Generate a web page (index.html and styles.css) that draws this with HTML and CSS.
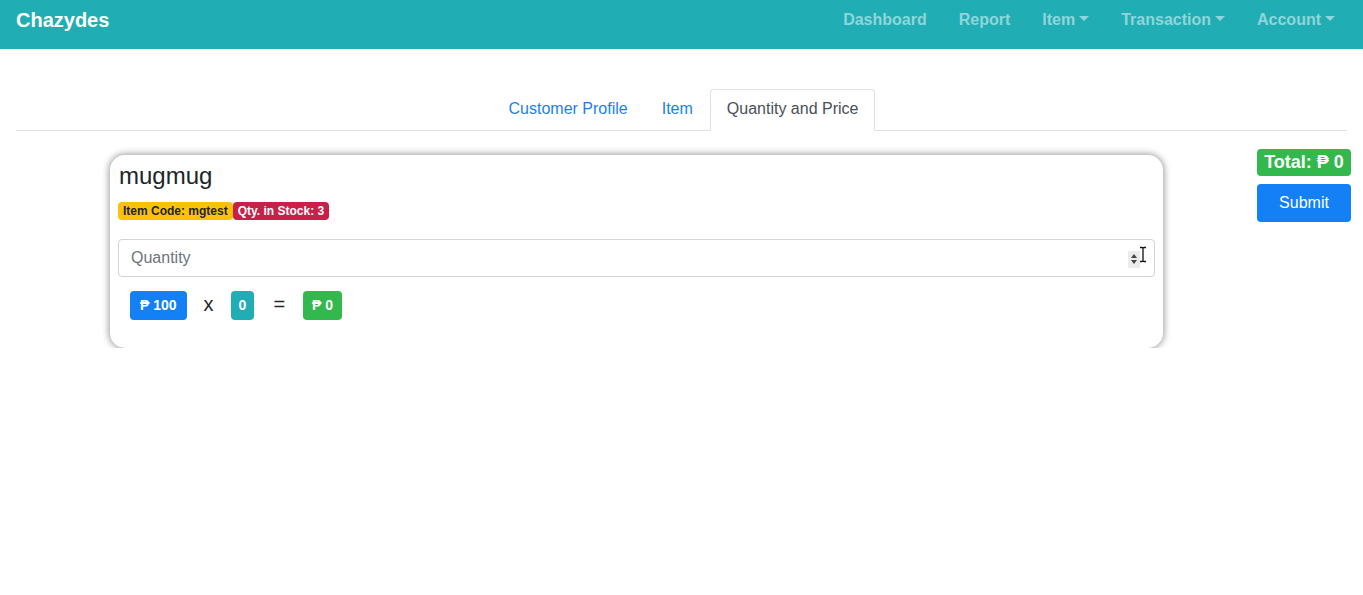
FILE: index.html
```html
<!DOCTYPE html>
<html>
<head>
<meta charset="utf-8">
<link rel="stylesheet" href="styles.css">
</head>
<body>
<nav class="navbar">
  <a class="brand">Chazydes</a>
  <ul class="nav-links">
    <li>Dashboard</li>
    <li>Report</li>
    <li class="dd">Item</li>
    <li class="dd">Transaction</li>
    <li class="dd">Account</li>
  </ul>
</nav>
<main class="page">
  <ul class="tabs">
    <li class="tab">Customer Profile</li>
    <li class="tab">Item</li>
    <li class="tab active">Quantity and Price</li>
  </ul>
  <div class="row">
    <div class="card">
      <h4 class="title">mugmug</h4>
      <div class="tags">
        <span class="badge yellow">Item Code: mgtest</span><span class="badge red">Qty. in Stock: 3</span>
      </div>
      <div class="input">
        <span class="placeholder">Quantity</span>
        <span class="spin"><span class="up"></span><span class="down"></span></span>
        <svg class="cursor" width="8" height="17" viewBox="0 0 8 17"><path d="M1 1.5h2.2M4.8 1.5H7M4 2.3v12.4M1 15.5h2.2M4.8 15.5H7M3 1.5q1 0 1 0.8q0-0.8 1-0.8M3 15.5q1 0 1-0.8q0 0.8 1 0.8" fill="none" stroke="#111" stroke-width="1.3"/></svg>
      </div>
      <div class="calc">
        <span class="pill blue">₱ 100</span>
        <span class="op">x</span>
        <span class="pill teal">0</span>
        <span class="op eq">=</span>
        <span class="pill green">₱ 0</span>
      </div>
    </div>
    <div class="side">
      <span class="total">Total: ₱ 0</span>
      <button class="submit">Submit</button>
    </div>
  </div>
</main>
</body>
</html>
```
FILE: styles.css
```css
* { box-sizing: border-box; }
body {
  margin: 0;
  font-family: "Liberation Sans", Arial, sans-serif;
  color: #212529;
  background: #fff;
}
.navbar {
  height: 49px;
  background: #21adb4;
  display: flex;
  align-items: flex-start;
  justify-content: space-between;
  padding: 8px 16px 0;
}
.brand {
  color: #fff;
  font-weight: bold;
  font-size: 20px;
  line-height: 24px;
}
.nav-links {
  list-style: none;
  margin: 0;
  padding: 0;
  display: flex;
}
.nav-links li {
  color: #8fd6da;
  font-weight: bold;
  font-size: 16px;
  line-height: 24px;
  padding: 0 16px;
}
.nav-links li:last-child { padding-right: 12px; }
.dd::after {
  content: "";
  display: inline-block;
  margin-left: 4px;
  vertical-align: 4px;
  border-top: 5px solid #8fd6da;
  border-left: 5px solid transparent;
  border-right: 5px solid transparent;
}
.page {
  padding: 40px 16px 0;
}
.tabs {
  list-style: none;
  margin: 0;
  padding: 0 0 0 4px;
  display: flex;
  justify-content: center;
  border-bottom: 1px solid #dee2e6;
}
.tab {
  color: #1a7ff5;
  font-size: 16px;
  padding: 9px 16px 12px;
  margin-bottom: -1px;
  border: 1px solid transparent;
  border-radius: 4px 4px 0 0;
  line-height: 19px;
}
.tab.active {
  color: #495057;
  border-color: #dee2e6 #dee2e6 #fff;
  background: #fff;
}
.row {
  display: flex;
  align-items: flex-start;
  margin-top: 18px;
}
.card {
  margin-left: 94px;
  margin-top: 6px;
  width: 1053px;
  border-radius: 15px;
  box-shadow: 0 0 7px 1px rgba(0,0,0,0.4);
  padding: 7px 8px 28px;
}
.title {
  margin: 0;
  font-size: 24px;
  font-weight: normal;
  line-height: 28px;
  padding-left: 1px;
}
.tags {
  display: flex;
  margin-top: 12px;
}
.badge {
  display: inline-block;
  font-size: 12px;
  font-weight: bold;
  padding: 3px 5px 3px;
  border-radius: 4px;
  line-height: 12px;
}
.yellow { background: #ffc107; color: #212529; }
.red { background: #c91f49; color: #fff; margin-left: 0; }
.input {
  margin-top: 19px;
  height: 38px;
  border: 1px solid #ced4da;
  border-radius: 4px;
  display: flex;
  align-items: center;
  padding: 0 12px;
  position: relative;
}
.placeholder {
  color: #6c757d;
  font-size: 16px;
  flex: 1;
}
.spin {
  display: flex;
  flex-direction: column;
  justify-content: center;
  gap: 2px;
  background: #ececec;
  width: 12px;
  height: 17px;
  align-items: center;
  margin-right: 2px;
  margin-top: 2px;
}
.up { border-bottom: 4px solid #444; border-left: 3.5px solid transparent; border-right: 3.5px solid transparent; }
.down { border-top: 4px solid #444; border-left: 3.5px solid transparent; border-right: 3.5px solid transparent; }
.cursor {
  position: absolute;
  right: 7px;
  top: 6px;
}
.calc {
  display: flex;
  align-items: center;
  margin-top: 14px;
  padding-left: 12px;
}
.pill {
  color: #fff;
  font-weight: bold;
  font-size: 14px;
  padding: 7px 8px;
  border-radius: 4px;
  line-height: 15px;
}
.pill.blue { background: #1380f5; padding: 7px 10px; }
.teal { background: #21adb4; }
.pill.green { background: #32b84d; padding: 7px 9px; }
.op {
  font-size: 20px;
  line-height: 20px;
  margin: 0 17px 3px 17px;
  color: #212529;
}
.op.eq { margin: 0 18px 3px 19px; }
.side {
  margin-left: auto;
  margin-right: -4px;
  display: flex;
  flex-direction: column;
  align-items: stretch;
  width: 94px;
  gap: 8px;
}
.total {
  background: #32b84d;
  color: #fff;
  font-weight: bold;
  font-size: 18px;
  border-radius: 4px;
  padding: 3px 5px;
  line-height: 21px;
  text-align: center;
  white-space: nowrap;
}
.submit {
  background: #1380f5;
  color: #fff;
  border: none;
  border-radius: 4px;
  height: 38px;
  font-family: "Liberation Sans", Arial, sans-serif;
  font-size: 16px;
}
```
